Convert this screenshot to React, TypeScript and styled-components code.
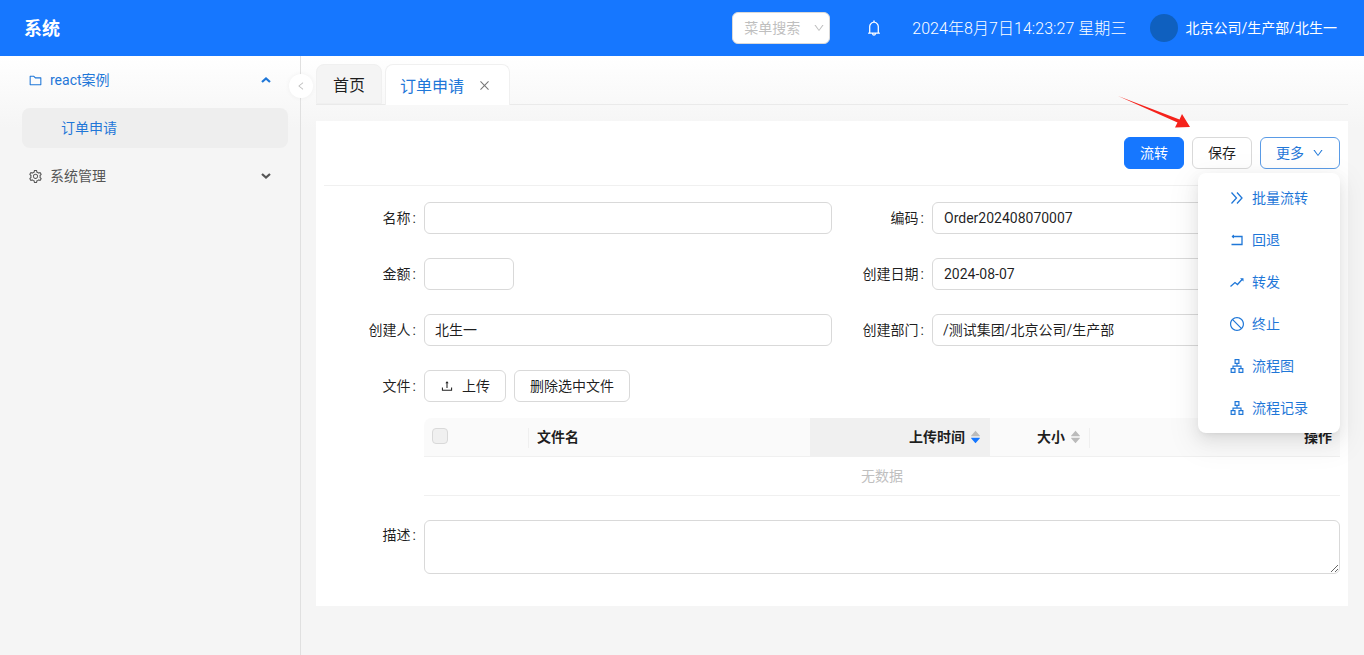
import React from "react";
import styled, { createGlobalStyle } from "styled-components";
import {
  AiOutlineApartment,
  AiOutlineBell,
  AiOutlineClose,
  AiOutlineDown,
  AiOutlineFolder,
  AiOutlineLeft,
  AiOutlineSetting,
  AiOutlineStop,
  AiOutlineUpload,
  AiFillCaretDown,
  AiFillCaretUp,
} from "react-icons/ai";

const FONT = `Roboto, "Noto Sans CJK SC", sans-serif`;
const BLUE = "#1677ff";
const LINK = "#1f77d8";

const Global = createGlobalStyle`
  html, body { margin: 0; padding: 0; height: 100%; }
  body { font-family: ${FONT}; font-size: 14px; color: rgba(0,0,0,.88); background: #f5f5f5; overflow: hidden; }
  #root { height: 100%; }
  * { box-sizing: border-box; }
`;

const Page = styled.div`
  width: 1364px;
  height: 655px;
  display: flex;
  flex-direction: column;
  position: relative;
  overflow: hidden;
`;

const Header = styled.header`
  height: 56px;
  flex: none;
  background: ${BLUE};
  color: #fff;
  display: flex;
  align-items: center;
  padding: 0 27px 0 24px;
`;
const Logo = styled.div`
  font-size: 18px;
  font-weight: 700;
  flex: 1;
  padding-bottom: 2px;
`;
const MenuSearch = styled.div`
  width: 98px;
  height: 32px;
  background: #fff;
  border: 1px solid #d9d9d9;
  border-radius: 6px;
  color: #bfbfbf;
  display: flex;
  align-items: center;
  justify-content: space-between;
  padding: 0 4px 2px 11px;
  font-size: 14px;
  svg { font-size: 12px; margin-top: 2px; }
`;
const Bell = styled.div`
  margin-left: 35px;
  width: 18px;
  display: flex;
  font-size: 18px;
`;
const DateText = styled.div`
  margin-left: 29px;
  padding-bottom: 2px;
  font-size: 16px;
  font-weight: 300;
  letter-spacing: 0.05px;
  white-space: nowrap;
`;
const Avatar = styled.div`
  margin-left: 24px;
  width: 28px;
  height: 28px;
  border-radius: 50%;
  background: #0f60bf;
`;
const UserText = styled.div`
  margin-left: 7px;
  padding-bottom: 2px;
  white-space: nowrap;
`;

const Body = styled.div`
  flex: 1;
  display: flex;
  min-height: 0;
  background: linear-gradient(#ffffff 0, #f5f5f5 72px);
`;
const Sidebar = styled.aside`
  width: 301px;
  flex: none;
  border-right: 1px solid #e0e0e0;
  padding: 0 12px 0 22px;
  position: relative;
  z-index: 1;
`;
const MenuRow = styled.div<{ $active?: boolean }>`
  height: 48px;
  margin-left: 6px;
  padding-right: 17px;
  display: flex;
  align-items: center;
  color: ${(p) => (p.$active ? LINK : "#555")};
  svg.lead { font-size: 15px; margin-right: 7px; }
  span { flex: 1; padding-bottom: 2px; }
`;
const SubItem = styled.div`
  height: 40px;
  margin: 4px 0 4px;
  border-radius: 8px;
  background: #eeeeee;
  color: ${LINK};
  display: flex;
  align-items: center;
  padding: 0 0 2px 39px;
`;
const Toggle = styled.div`
  position: absolute;
  right: -13px;
  top: 18px;
  width: 24px;
  height: 24px;
  border-radius: 50%;
  background: #fff;
  color: #bbb;
  display: flex;
  align-items: center;
  justify-content: center;
  font-size: 10px;
  box-shadow: 0 0 5px rgba(0,0,0,.05);
`;

const Main = styled.main`
  flex: 1;
  min-width: 0;
  padding: 8px 16px 0 15px;
`;
const TabBar = styled.div`
  height: 41px;
  border-bottom: 1px solid #eaeaea;
  display: flex;
  align-items: flex-end;
  gap: 3px;
`;
const Tab = styled.div<{ $active?: boolean }>`
  height: ${(p) => (p.$active ? "41px" : "40px")};
  margin-bottom: ${(p) => (p.$active ? "-1px" : "0")};
  border: 1px solid #f0f0f0;
  border-bottom: ${(p) => (p.$active ? "none" : "1px solid #f0f0f0")};
  border-radius: 8px 8px 0 0;
  background: ${(p) => (p.$active ? "#fff" : "#f4f4f4")};
  color: ${(p) => (p.$active ? LINK : "rgba(0,0,0,.88)")};
  font-size: 16px;
  display: flex;
  align-items: center;
  padding: ${(p) => (p.$active ? "0 18px 0 14px" : "0 16px")};
  svg { margin-left: 14px; font-size: 13px; color: #777; }
`;
const Card = styled.section`
  margin-top: 16px;
  height: 485px;
  background: #fff;
  padding: 16px 8px 0;
`;
const Toolbar = styled.div`
  height: 49px;
  border-bottom: 1px solid #f0f0f0;
  display: flex;
  justify-content: flex-end;
  gap: 8px;
`;
const Btn = styled.button<{ $kind?: "primary" | "link" }>`
  height: 32px;
  padding: 0 15px 2px;
  border-radius: 6px;
  font: 14px ${FONT};
  display: inline-flex;
  align-items: center;
  background: ${(p) => (p.$kind === "primary" ? BLUE : "#fff")};
  color: ${(p) => (p.$kind === "primary" ? "#fff" : p.$kind === "link" ? LINK : "rgba(0,0,0,.88)")};
  border: 1px solid ${(p) => (p.$kind === "primary" ? BLUE : p.$kind === "link" ? "#5a9be6" : "#d9d9d9")};
  svg { font-size: 12px; margin-top: 2px; }
`;
const MoreIcon = styled(AiOutlineDown)`
  margin-left: 8px;
`;
const UploadIcon = styled(AiOutlineUpload)`
  margin-right: 8px;
  font-size: 14px !important;
`;
const Form = styled.div`
  padding-top: 16px;
  display: grid;
  grid-template-columns: 100px 408px 100px 408px;
  grid-auto-rows: 32px;
  row-gap: 24px;
  align-items: center;
`;
const Label = styled.label`
  text-align: right;
  padding: 0 8px 2px 0;
  white-space: nowrap;
`;
const Colon = styled.span`
  margin-left: 2px;
`;
const Input = styled.input<{ $w?: number; $cjk?: boolean }>`
  width: ${(p) => (p.$w ? `${p.$w}px` : "100%")};
  height: 32px;
  padding: ${(p) => (p.$cjk ? "0 11px 2px 10px" : "0 11px")};
  border: 1px solid #d9d9d9;
  border-radius: 6px;
  font: 14px ${FONT};
  color: rgba(0,0,0,.88);
  background: #fff;
  outline: none;
`;
const Actions = styled.div`
  grid-column: 2 / 5;
  display: flex;
  gap: 8px;
`;
const Table = styled.div`
  margin: 16px 0 0 100px;
  font-size: 14px;
`;
const THead = styled.div`
  display: grid;
  grid-template-columns: 105px 281px 180px 100px 1fr;
  height: 39px;
  background: #fafafa;
  border-bottom: 1px solid #f0f0f0;
  border-radius: 8px 8px 0 0;
  font-weight: 700;
`;
const Th = styled.div<{ $sorted?: boolean; $right?: boolean; $sep?: boolean }>`
  display: flex;
  align-items: center;
  justify-content: ${(p) => (p.$right ? "flex-end" : "flex-start")};
  padding: 0 8px 2px;
  position: relative;
  background: ${(p) => (p.$sorted ? "#f0f0f0" : "transparent")};
  ${(p) =>
    p.$sep
      ? `&::after{content:"";position:absolute;right:0;top:10px;height:20px;width:1px;background:#efefef;}`
      : ""}
`;
const Check = styled.span`
  width: 16px;
  height: 16px;
  border-radius: 4px;
  border: 1px solid #d9d9d9;
  background: #f0f0f0;
`;
const Sorter = styled.span`
  display: inline-flex;
  flex-direction: column;
  margin: 2px 0 0 4px;
  font-size: 13px;
  line-height: 0;
  color: #bbb;
  svg { display: block; margin: -3px 0; }
`;
const Active = styled(AiFillCaretDown)`
  color: ${BLUE};
`;
const Empty = styled.div`
  height: 39px;
  padding-bottom: 2px;
  border-bottom: 1px solid #f0f0f0;
  display: flex;
  align-items: center;
  justify-content: center;
  color: #bfbfbf;
`;
const DescRow = styled.div`
  margin-top: 24px;
  display: grid;
  grid-template-columns: 100px 1fr;
  align-items: start;
`;
const DescLabel = styled(Label)`
  line-height: 30px;
  padding-bottom: 0;
`;
const TextArea = styled.textarea`
  display: block;
  width: 100%;
  height: 54px;
  border: 1px solid #d9d9d9;
  border-radius: 6px;
  outline: none;
  padding: 4px 11px;
  font: 14px ${FONT};
`;
const Dropdown = styled.div`
  position: absolute;
  left: 1198px;
  top: 173px;
  width: 142px;
  height: 260px;
  background: #fff;
  border-radius: 8px;
  box-shadow: 0 6px 16px rgba(0,0,0,.08), 0 3px 6px -4px rgba(0,0,0,.12), 0 9px 28px 8px rgba(0,0,0,.05);
  padding: 4px 0;
  display: flex;
  flex-direction: column;
`;
const DropItem = styled.div`
  height: 42px;
  display: flex;
  align-items: center;
  padding-left: 31px;
  color: ${LINK};
  svg { font-size: 16px; width: 16px; height: 16px; margin-right: 5px; flex: none; }
  span { margin-left: 2px; padding-bottom: 2px; }
`;
const Arrow = styled.svg`
  position: absolute;
  left: 1116px;
  top: 94px;
`;
const ChevronSvg = styled.svg`
  flex: none;
`;

const Chevron = ({ up }: { up?: boolean }) => (
  <ChevronSvg width="10" height="8" viewBox="0 0 10 8" fill="none" stroke="currentColor" strokeWidth="2.2">
    <path d={up ? "M1 6l4-3.6L9 6" : "M1 2l4 3.6L9 2"} />
  </ChevronSvg>
);

const DoubleIcon = () => (
  <svg viewBox="0 0 16 16" fill="none" stroke="currentColor" strokeWidth="1.3">
    <path d="M2.5 2.5L7.5 8l-5 5.5M8 2.5L13 8l-5 5.5" />
  </svg>
);
const RollIcon = () => (
  <svg viewBox="0 0 16 16" fill="none" stroke="currentColor" strokeWidth="1.3">
    <path d="M3 4.5h10v8H2.5" />
    <path d="M2.5 4.5l2.5-2v4z" fill="currentColor" stroke="none" />
  </svg>
);
const TrendIcon = () => (
  <svg viewBox="0 0 16 16" fill="none" stroke="currentColor" strokeWidth="1.3">
    <path d="M1.5 12.5L6 8.5l2.5 2L13.5 5" />
    <path d="M11 4.2h3.5v3.4z" fill="currentColor" stroke="none" />
  </svg>
);

const items: [string, React.ReactNode][] = [
  ["批量流转", <DoubleIcon />],
  ["回退", <RollIcon />],
  ["转发", <TrendIcon />],
  ["终止", <AiOutlineStop />],
  ["流程图", <AiOutlineApartment />],
  ["流程记录", <AiOutlineApartment />],
];

const FieldLabel = ({ text }: { text: string }) => (
  <Label>{text}<Colon>:</Colon></Label>
);

export default function App() {
  return (
    <Page>
      <Global />
      <Header>
        <Logo>系统</Logo>
        <MenuSearch>菜单搜索<AiOutlineDown /></MenuSearch>
        <Bell><AiOutlineBell /></Bell>
        <DateText>2024年8月7日14:23:27 星期三</DateText>
        <Avatar />
        <UserText>北京公司/生产部/北生一</UserText>
      </Header>
      <Body>
        <Sidebar>
          <MenuRow $active>
            <AiOutlineFolder className="lead" />
            <span>react案例</span>
            <Chevron up />
          </MenuRow>
          <SubItem>订单申请</SubItem>
          <MenuRow>
            <AiOutlineSetting className="lead" />
            <span>系统管理</span>
            <Chevron />
          </MenuRow>
          <Toggle><AiOutlineLeft /></Toggle>
        </Sidebar>
        <Main>
          <TabBar>
            <Tab>首页</Tab>
            <Tab $active>订单申请<AiOutlineClose /></Tab>
          </TabBar>
          <Card>
            <Toolbar>
              <Btn $kind="primary">流转</Btn>
              <Btn>保存</Btn>
              <Btn $kind="link">更多<MoreIcon /></Btn>
            </Toolbar>
            <Form>
              <FieldLabel text="名称" />
              <Input />
              <FieldLabel text="编码" />
              <Input defaultValue="Order202408070007" />
              <FieldLabel text="金额" />
              <Input $w={90} />
              <FieldLabel text="创建日期" />
              <Input defaultValue="2024-08-07" />
              <FieldLabel text="创建人" />
              <Input $cjk defaultValue="北生一" />
              <FieldLabel text="创建部门" />
              <Input $cjk defaultValue="/测试集团/北京公司/生产部" />
              <FieldLabel text="文件" />
              <Actions>
                <Btn><UploadIcon />上传</Btn>
                <Btn>删除选中文件</Btn>
              </Actions>
            </Form>
            <Table>
              <THead>
                <Th $sep><Check /></Th>
                <Th>文件名</Th>
                <Th $sorted $right>
                  上传时间
                  <Sorter><AiFillCaretUp /><Active /></Sorter>
                </Th>
                <Th $right $sep>
                  大小
                  <Sorter><AiFillCaretUp /><AiFillCaretDown /></Sorter>
                </Th>
                <Th $right>操作</Th>
              </THead>
              <Empty>无数据</Empty>
            </Table>
            <DescRow>
              <DescLabel>描述<Colon>:</Colon></DescLabel>
              <TextArea />
            </DescRow>
          </Card>
        </Main>
      </Body>
      <Dropdown>
        {items.map(([t, icon]) => (
          <DropItem key={t}>{icon}<span>{t}</span></DropItem>
        ))}
      </Dropdown>
      <Arrow width="78" height="36" viewBox="0 0 78 36">
        <path d="M2 2L63.5 25.5L66 20L74 33L59 33.5L61.5 28.5Z" fill="#f5221b" />
      </Arrow>
    </Page>
  );
}
